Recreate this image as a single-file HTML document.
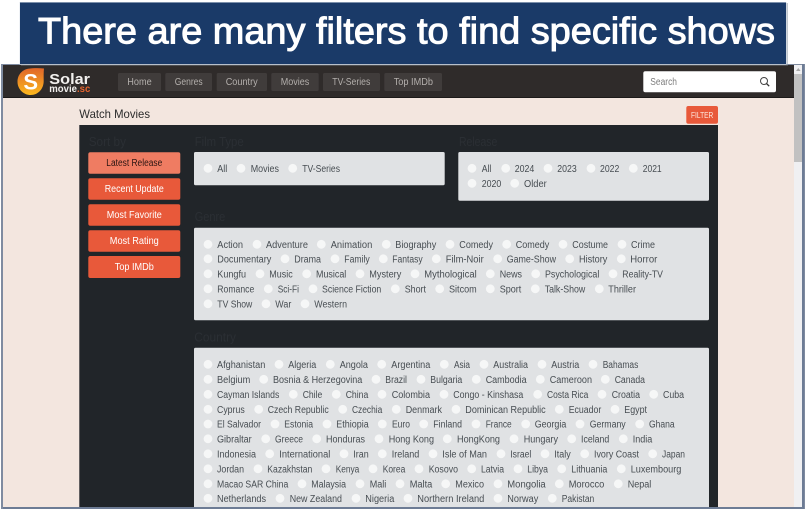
<!DOCTYPE html>
<html><head><meta charset="utf-8"><title>Solar Movie</title>
<style>
html,body{margin:0;padding:0;background:#fff;width:806px;height:510px;overflow:hidden}
svg{display:block;font-family:"Liberation Sans",sans-serif}
.o text{font-size:10px;fill:#474d52}
.o circle{fill:#f6f7f7;r:4.4px}
.n{font-size:10px;fill:#b3afac}
.h{font-size:12.5px;fill:#2b2f34}
.b{font-size:10px;fill:#fff;text-anchor:middle}
</style></head><body>
<svg xmlns="http://www.w3.org/2000/svg" width="806" height="510" viewBox="0 0 806 510">
<defs>
<linearGradient id="lg" x1="0" y1="0" x2="0" y2="1"><stop offset="0" stop-color="#e0662a"/><stop offset="1" stop-color="#fbb81e"/></linearGradient>
</defs>
<rect x="1" y="64" width="804" height="445" fill="#7f8ba0"/>
<rect x="3" y="65" width="800" height="442" fill="#f3e6df"/>
<rect x="3" y="65" width="791" height="33" fill="#2f2b2a"/>
<rect x="3" y="97" width="791" height="1" fill="#1c1a19"/>
<rect x="794" y="65" width="8.500" height="442" fill="#f0f0f2"/>
<rect x="794" y="74" width="8.500" height="88" fill="#c1c1c1"/>
<path d="M798.300 68l-2.300 3h4.600z" fill="#a8a8a8"/>
<rect x="802" y="64" width="2" height="445" fill="#6d7c95"/>
<rect x="3" y="507" width="800" height="2" fill="#6d7c95"/>

<rect x="21" y="3" width="767" height="62.500" fill="#9aa3ad" opacity=".6"/>
<rect x="19.500" y="2" width="767" height="62.500" fill="#dfe5ee"/>
<rect x="20" y="2.500" width="766" height="61.500" fill="#1a3a68"/>
<text x="38" y="43.500" font-size="37" fill="#fff" stroke="#fff" stroke-width="1" textLength="737" lengthAdjust="spacingAndGlyphs">There are many filters to find specific shows</text>

<path d="M28 68.800C33 68 39 68 44 68.500 43.600 72 43.600 76 43.700 81 43.700 89 38 95 30.700 95 23.500 95 17.500 89 17.500 81.700 17.500 75 22 70 28 68.800z" fill="url(#lg)"/>
<text x="30.700" y="89.500" font-size="22" font-weight="700" fill="#fff" text-anchor="middle">S</text>
<text x="49.300" y="84" font-size="15" font-weight="700" fill="#f2f0ee" textLength="40.700" lengthAdjust="spacingAndGlyphs">Solar</text>
<text x="49.300" y="92" font-size="10" font-weight="700" textLength="41" lengthAdjust="spacingAndGlyphs" fill="#f2f0ee">movie<tspan fill="#e8642e">.sc</tspan></text>

<g fill="#403c3b">
<rect x="118" y="73" width="43" height="18" rx="1.500"/>
<rect x="165.300" y="73" width="46.700" height="18" rx="1.500"/>
<rect x="216.700" y="73" width="50.300" height="18" rx="1.500"/>
<rect x="271.300" y="73" width="47.400" height="18" rx="1.500"/>
<rect x="323" y="73" width="57" height="18" rx="1.500"/>
<rect x="384.300" y="73" width="57.700" height="18" rx="1.500"/>
</g>
<text class="n" x="127.300" y="85.200" textLength="24.400" lengthAdjust="spacingAndGlyphs">Home</text>
<text class="n" x="174.700" y="85.200" textLength="28" lengthAdjust="spacingAndGlyphs">Genres</text>
<text class="n" x="225.700" y="85.200" textLength="32" lengthAdjust="spacingAndGlyphs">Country</text>
<text class="n" x="280.700" y="85.200" textLength="28.600" lengthAdjust="spacingAndGlyphs">Movies</text>
<text class="n" x="332.300" y="85.200" textLength="38" lengthAdjust="spacingAndGlyphs">TV-Series</text>
<text class="n" x="393.700" y="85.200" textLength="39.300" lengthAdjust="spacingAndGlyphs">Top IMDb</text>

<rect x="643.300" y="71.300" width="132.700" height="21" rx="2" fill="#fff"/>
<text x="650.300" y="85.200" font-size="10" fill="#7d7d7d" textLength="26.700" lengthAdjust="spacingAndGlyphs">Search</text>
<circle cx="764" cy="81" r="3.500" fill="none" stroke="#444" stroke-width="1"/>
<path d="M766.500 83.500l2.700 2.700" stroke="#333" stroke-width="1.300" fill="none"/>

<text x="79.300" y="118" font-size="12" fill="#2c2c2c" textLength="70.700" lengthAdjust="spacingAndGlyphs">Watch Movies</text>
<rect x="686.300" y="106" width="31.700" height="17.700" rx="2" fill="#e8593a"/>
<text x="691" y="117.800" font-size="8" fill="#fde8e0" textLength="22.300" lengthAdjust="spacingAndGlyphs">FILTER</text>

<rect x="79.300" y="125" width="638.700" height="382" fill="#212529"/>

<text class="h" x="88.700" y="146" textLength="37.300" lengthAdjust="spacingAndGlyphs">Sort by</text>
<text class="h" x="194.700" y="146" textLength="49" lengthAdjust="spacingAndGlyphs">Film Type</text>
<text class="h" x="459" y="146" textLength="38.300" lengthAdjust="spacingAndGlyphs">Release</text>
<text class="h" x="194.700" y="221" textLength="30.600" lengthAdjust="spacingAndGlyphs">Genre</text>
<text class="h" x="194.300" y="341.700" textLength="41.700" lengthAdjust="spacingAndGlyphs">Country</text>

<rect x="88.300" y="152.300" width="92" height="21.400" rx="2" fill="#ef7c62"/>
<rect x="88.300" y="178.300" width="92" height="21.400" rx="2" fill="#e8593a"/>
<rect x="88.300" y="204.300" width="92" height="21.400" rx="2" fill="#e8593a"/>
<rect x="88.300" y="230.300" width="92" height="21.400" rx="2" fill="#e8593a"/>
<rect x="88.300" y="256" width="92" height="22" rx="2" fill="#e8593a"/>
<text class="b" x="134.300" y="166.200" style="fill:#2a1512" textLength="56" lengthAdjust="spacingAndGlyphs">Latest Release</text>
<text class="b" x="134.300" y="192.200" textLength="59" lengthAdjust="spacingAndGlyphs">Recent Update</text>
<text class="b" x="134.300" y="218.200" textLength="55" lengthAdjust="spacingAndGlyphs">Most Favorite</text>
<text class="b" x="134.300" y="244.200" textLength="49" lengthAdjust="spacingAndGlyphs">Most Rating</text>
<text class="b" x="134.300" y="270.200" textLength="39" lengthAdjust="spacingAndGlyphs">Top IMDb</text>

<g fill="#e0e2e4">
<rect x="194" y="152" width="250.700" height="33.300" rx="1.500"/>
<rect x="458.300" y="152" width="250.700" height="48.700" rx="1.500"/>
<rect x="194" y="227.700" width="515" height="92.600" rx="1.500"/>
<path d="M194 507v-157.800q0-1.500 1.500-1.500h512q1.500 0 1.500 1.500v157.800z"/>
</g>

<g class="o">
<g transform="translate(0,172)">
<circle cx="208" cy="-3.700"/><text x="217.300" textLength="10" lengthAdjust="spacingAndGlyphs">All</text>
<circle cx="241" cy="-3.700"/><text x="250.700" textLength="28.300" lengthAdjust="spacingAndGlyphs">Movies</text>
<circle cx="292.700" cy="-3.700"/><text x="302.300" textLength="37.700" lengthAdjust="spacingAndGlyphs">TV-Series</text>
<circle cx="472" cy="-3.700"/><text x="481.700" textLength="9.600" lengthAdjust="spacingAndGlyphs">All</text>
<circle cx="505.700" cy="-3.700"/><text x="514.700" textLength="19.600" lengthAdjust="spacingAndGlyphs">2024</text>
<circle cx="548" cy="-3.700"/><text x="557.300" textLength="19.400" lengthAdjust="spacingAndGlyphs">2023</text>
<circle cx="591" cy="-3.700"/><text x="600" textLength="19.300" lengthAdjust="spacingAndGlyphs">2022</text>
<circle cx="633.300" cy="-3.700"/><text x="642.700" textLength="19" lengthAdjust="spacingAndGlyphs">2021</text>
</g>
<g transform="translate(0,187)">
<circle cx="472" cy="-3.700"/><text x="481.700" textLength="19.600" lengthAdjust="spacingAndGlyphs">2020</text>
<circle cx="514.700" cy="-3.700"/><text x="524" textLength="22.700" lengthAdjust="spacingAndGlyphs">Older</text>
</g>

<g transform="translate(0,248)">
<circle cx="208" cy="-3.700"/><text x="217.300" textLength="25.700" lengthAdjust="spacingAndGlyphs">Action</text>
<circle cx="257" cy="-3.700"/><text x="266" textLength="42" lengthAdjust="spacingAndGlyphs">Adventure</text>
<circle cx="321.300" cy="-3.700"/><text x="330.700" textLength="41.600" lengthAdjust="spacingAndGlyphs">Animation</text>
<circle cx="386.300" cy="-3.700"/><text x="395.300" textLength="41" lengthAdjust="spacingAndGlyphs">Biography</text>
<circle cx="450" cy="-3.700"/><text x="459.300" textLength="33.700" lengthAdjust="spacingAndGlyphs">Comedy</text>
<circle cx="506.700" cy="-3.700"/><text x="515.700" textLength="33.600" lengthAdjust="spacingAndGlyphs">Comedy</text>
<circle cx="563" cy="-3.700"/><text x="572.300" textLength="35.700" lengthAdjust="spacingAndGlyphs">Costume</text>
<circle cx="622" cy="-3.700"/><text x="631" textLength="24" lengthAdjust="spacingAndGlyphs">Crime</text>
</g>
<g transform="translate(0,262.500)">
<circle cx="208" cy="-3.700"/><text x="217.300" textLength="54" lengthAdjust="spacingAndGlyphs">Documentary</text>
<circle cx="285" cy="-3.700"/><text x="294.300" textLength="26.700" lengthAdjust="spacingAndGlyphs">Drama</text>
<circle cx="335" cy="-3.700"/><text x="344.300" textLength="25.400" lengthAdjust="spacingAndGlyphs">Family</text>
<circle cx="383.300" cy="-3.700"/><text x="392.300" textLength="30.400" lengthAdjust="spacingAndGlyphs">Fantasy</text>
<circle cx="436.300" cy="-3.700"/><text x="445.700" textLength="38" lengthAdjust="spacingAndGlyphs">Film-Noir</text>
<circle cx="497.700" cy="-3.700"/><text x="506.700" textLength="49.300" lengthAdjust="spacingAndGlyphs">Game-Show</text>
<circle cx="569.700" cy="-3.700"/><text x="579" textLength="28.300" lengthAdjust="spacingAndGlyphs">History</text>
<circle cx="621.300" cy="-3.700"/><text x="630.300" textLength="27" lengthAdjust="spacingAndGlyphs">Horror</text>
</g>
<g transform="translate(0,277.500)">
<circle cx="208" cy="-3.700"/><text x="217.300" textLength="28.700" lengthAdjust="spacingAndGlyphs">Kungfu</text>
<circle cx="260" cy="-3.700"/><text x="269.300" textLength="23.400" lengthAdjust="spacingAndGlyphs">Music</text>
<circle cx="306.700" cy="-3.700"/><text x="316" textLength="30.300" lengthAdjust="spacingAndGlyphs">Musical</text>
<circle cx="360" cy="-3.700"/><text x="369.300" textLength="32" lengthAdjust="spacingAndGlyphs">Mystery</text>
<circle cx="415" cy="-3.700"/><text x="424.300" textLength="52.400" lengthAdjust="spacingAndGlyphs">Mythological</text>
<circle cx="490.300" cy="-3.700"/><text x="499.700" textLength="22.300" lengthAdjust="spacingAndGlyphs">News</text>
<circle cx="535.700" cy="-3.700"/><text x="545" textLength="54.300" lengthAdjust="spacingAndGlyphs">Psychological</text>
<circle cx="613" cy="-3.700"/><text x="622.300" textLength="40.700" lengthAdjust="spacingAndGlyphs">Reality-TV</text>
</g>
<g transform="translate(0,292.500)">
<circle cx="208" cy="-3.700"/><text x="217.300" textLength="37" lengthAdjust="spacingAndGlyphs">Romance</text>
<circle cx="268.300" cy="-3.700"/><text x="277.700" textLength="21.300" lengthAdjust="spacingAndGlyphs">Sci-Fi</text>
<circle cx="313" cy="-3.700"/><text x="322" textLength="59.300" lengthAdjust="spacingAndGlyphs">Science Fiction</text>
<circle cx="395.300" cy="-3.700"/><text x="404.700" textLength="21.300" lengthAdjust="spacingAndGlyphs">Short</text>
<circle cx="439.700" cy="-3.700"/><text x="449" textLength="27.700" lengthAdjust="spacingAndGlyphs">Sitcom</text>
<circle cx="490.300" cy="-3.700"/><text x="499.700" textLength="21.600" lengthAdjust="spacingAndGlyphs">Sport</text>
<circle cx="535.300" cy="-3.700"/><text x="544.700" textLength="40.600" lengthAdjust="spacingAndGlyphs">Talk-Show</text>
<circle cx="599.300" cy="-3.700"/><text x="608.300" textLength="27.700" lengthAdjust="spacingAndGlyphs">Thriller</text>
</g>
<g transform="translate(0,307.500)">
<circle cx="208" cy="-3.700"/><text x="217.300" textLength="35" lengthAdjust="spacingAndGlyphs">TV Show</text>
<circle cx="266" cy="-3.700"/><text x="275.300" textLength="16" lengthAdjust="spacingAndGlyphs">War</text>
<circle cx="305" cy="-3.700"/><text x="314.300" textLength="32.700" lengthAdjust="spacingAndGlyphs">Western</text>
</g>

<g transform="translate(0,368)">
<circle cx="208" cy="-3.700"/><text x="217" textLength="48.300" lengthAdjust="spacingAndGlyphs">Afghanistan</text>
<circle cx="279" cy="-3.700"/><text x="288.300" textLength="28" lengthAdjust="spacingAndGlyphs">Algeria</text>
<circle cx="330.300" cy="-3.700"/><text x="339.700" textLength="28.300" lengthAdjust="spacingAndGlyphs">Angola</text>
<circle cx="381.700" cy="-3.700"/><text x="391.300" textLength="39" lengthAdjust="spacingAndGlyphs">Argentina</text>
<circle cx="444.300" cy="-3.700"/><text x="454" textLength="16" lengthAdjust="spacingAndGlyphs">Asia</text>
<circle cx="484" cy="-3.700"/><text x="493.300" textLength="34.700" lengthAdjust="spacingAndGlyphs">Australia</text>
<circle cx="542" cy="-3.700"/><text x="551.300" textLength="28" lengthAdjust="spacingAndGlyphs">Austria</text>
<circle cx="593" cy="-3.700"/><text x="602.700" textLength="35.600" lengthAdjust="spacingAndGlyphs">Bahamas</text>
</g>
<g transform="translate(0,383)">
<circle cx="208" cy="-3.700"/><text x="217" textLength="33.300" lengthAdjust="spacingAndGlyphs">Belgium</text>
<circle cx="263.700" cy="-3.700"/><text x="273" textLength="89.300" lengthAdjust="spacingAndGlyphs">Bosnia &amp; Herzegovina</text>
<circle cx="376" cy="-3.700"/><text x="385.300" textLength="21.700" lengthAdjust="spacingAndGlyphs">Brazil</text>
<circle cx="421" cy="-3.700"/><text x="430.300" textLength="32" lengthAdjust="spacingAndGlyphs">Bulgaria</text>
<circle cx="476.300" cy="-3.700"/><text x="485.700" textLength="41" lengthAdjust="spacingAndGlyphs">Cambodia</text>
<circle cx="540.300" cy="-3.700"/><text x="549.700" textLength="42.300" lengthAdjust="spacingAndGlyphs">Cameroon</text>
<circle cx="605.300" cy="-3.700"/><text x="614.700" textLength="30.300" lengthAdjust="spacingAndGlyphs">Canada</text>
</g>
<g transform="translate(0,398)">
<circle cx="208" cy="-3.700"/><text x="217" textLength="62.300" lengthAdjust="spacingAndGlyphs">Cayman Islands</text>
<circle cx="293.300" cy="-3.700"/><text x="302.700" textLength="19.600" lengthAdjust="spacingAndGlyphs">Chile</text>
<circle cx="336.300" cy="-3.700"/><text x="345.700" textLength="22.600" lengthAdjust="spacingAndGlyphs">China</text>
<circle cx="382" cy="-3.700"/><text x="391.700" textLength="38.300" lengthAdjust="spacingAndGlyphs">Colombia</text>
<circle cx="444" cy="-3.700"/><text x="453.300" textLength="70" lengthAdjust="spacingAndGlyphs">Congo - Kinshasa</text>
<circle cx="537.700" cy="-3.700"/><text x="547" textLength="41.300" lengthAdjust="spacingAndGlyphs">Costa Rica</text>
<circle cx="602" cy="-3.700"/><text x="611.700" textLength="28.300" lengthAdjust="spacingAndGlyphs">Croatia</text>
<circle cx="653.700" cy="-3.700"/><text x="663" textLength="21" lengthAdjust="spacingAndGlyphs">Cuba</text>
</g>
<g transform="translate(0,413)">
<circle cx="208" cy="-3.700"/><text x="217" textLength="27.700" lengthAdjust="spacingAndGlyphs">Cyprus</text>
<circle cx="258.700" cy="-3.700"/><text x="267.700" textLength="61" lengthAdjust="spacingAndGlyphs">Czech Republic</text>
<circle cx="342.700" cy="-3.700"/><text x="352" textLength="30.300" lengthAdjust="spacingAndGlyphs">Czechia</text>
<circle cx="396.300" cy="-3.700"/><text x="405.700" textLength="36.300" lengthAdjust="spacingAndGlyphs">Denmark</text>
<circle cx="456" cy="-3.700"/><text x="465.300" textLength="80.400" lengthAdjust="spacingAndGlyphs">Dominican Republic</text>
<circle cx="559.300" cy="-3.700"/><text x="568.700" textLength="32.600" lengthAdjust="spacingAndGlyphs">Ecuador</text>
<circle cx="615" cy="-3.700"/><text x="624.300" textLength="22.700" lengthAdjust="spacingAndGlyphs">Egypt</text>
</g>
<g transform="translate(0,427.700)">
<circle cx="208" cy="-3.700"/><text x="217" textLength="44" lengthAdjust="spacingAndGlyphs">El Salvador</text>
<circle cx="275" cy="-3.700"/><text x="284.300" textLength="28.700" lengthAdjust="spacingAndGlyphs">Estonia</text>
<circle cx="327" cy="-3.700"/><text x="336.300" textLength="32.400" lengthAdjust="spacingAndGlyphs">Ethiopia</text>
<circle cx="382.300" cy="-3.700"/><text x="392" textLength="18" lengthAdjust="spacingAndGlyphs">Euro</text>
<circle cx="423.700" cy="-3.700"/><text x="433.300" textLength="28.700" lengthAdjust="spacingAndGlyphs">Finland</text>
<circle cx="476" cy="-3.700"/><text x="485.700" textLength="26" lengthAdjust="spacingAndGlyphs">France</text>
<circle cx="525.700" cy="-3.700"/><text x="534.700" textLength="31.600" lengthAdjust="spacingAndGlyphs">Georgia</text>
<circle cx="580" cy="-3.700"/><text x="589.700" textLength="36" lengthAdjust="spacingAndGlyphs">Germany</text>
<circle cx="639.700" cy="-3.700"/><text x="649" textLength="25.700" lengthAdjust="spacingAndGlyphs">Ghana</text>
</g>
<g transform="translate(0,442.500)">
<circle cx="208" cy="-3.700"/><text x="217" textLength="34.700" lengthAdjust="spacingAndGlyphs">Gibraltar</text>
<circle cx="265.700" cy="-3.700"/><text x="275" textLength="28" lengthAdjust="spacingAndGlyphs">Greece</text>
<circle cx="316.700" cy="-3.700"/><text x="326" textLength="39" lengthAdjust="spacingAndGlyphs">Honduras</text>
<circle cx="379" cy="-3.700"/><text x="388.700" textLength="45.300" lengthAdjust="spacingAndGlyphs">Hong Kong</text>
<circle cx="447.300" cy="-3.700"/><text x="457" textLength="43" lengthAdjust="spacingAndGlyphs">HongKong</text>
<circle cx="514" cy="-3.700"/><text x="523.700" textLength="34.300" lengthAdjust="spacingAndGlyphs">Hungary</text>
<circle cx="571.700" cy="-3.700"/><text x="581" textLength="28.300" lengthAdjust="spacingAndGlyphs">Iceland</text>
<circle cx="623.300" cy="-3.700"/><text x="632.700" textLength="19.600" lengthAdjust="spacingAndGlyphs">India</text>
</g>
<g transform="translate(0,457.500)">
<circle cx="208" cy="-3.700"/><text x="217" textLength="39" lengthAdjust="spacingAndGlyphs">Indonesia</text>
<circle cx="269.700" cy="-3.700"/><text x="279.300" textLength="51" lengthAdjust="spacingAndGlyphs">International</text>
<circle cx="344" cy="-3.700"/><text x="353.300" textLength="15.400" lengthAdjust="spacingAndGlyphs">Iran</text>
<circle cx="382.300" cy="-3.700"/><text x="391.700" textLength="27.600" lengthAdjust="spacingAndGlyphs">Ireland</text>
<circle cx="433" cy="-3.700"/><text x="442.300" textLength="44.700" lengthAdjust="spacingAndGlyphs">Isle of Man</text>
<circle cx="501" cy="-3.700"/><text x="510.300" textLength="21" lengthAdjust="spacingAndGlyphs">Israel</text>
<circle cx="545" cy="-3.700"/><text x="554.300" textLength="16.400" lengthAdjust="spacingAndGlyphs">Italy</text>
<circle cx="584.700" cy="-3.700"/><text x="594" textLength="45" lengthAdjust="spacingAndGlyphs">Ivory Coast</text>
<circle cx="652.700" cy="-3.700"/><text x="662" textLength="23" lengthAdjust="spacingAndGlyphs">Japan</text>
</g>
<g transform="translate(0,472.500)">
<circle cx="208" cy="-3.700"/><text x="217" textLength="27" lengthAdjust="spacingAndGlyphs">Jordan</text>
<circle cx="258" cy="-3.700"/><text x="267.300" textLength="45" lengthAdjust="spacingAndGlyphs">Kazakhstan</text>
<circle cx="326" cy="-3.700"/><text x="335.700" textLength="23.600" lengthAdjust="spacingAndGlyphs">Kenya</text>
<circle cx="373" cy="-3.700"/><text x="382.700" textLength="22.600" lengthAdjust="spacingAndGlyphs">Korea</text>
<circle cx="419" cy="-3.700"/><text x="428.700" textLength="29.300" lengthAdjust="spacingAndGlyphs">Kosovo</text>
<circle cx="471.700" cy="-3.700"/><text x="481" textLength="23" lengthAdjust="spacingAndGlyphs">Latvia</text>
<circle cx="518" cy="-3.700"/><text x="527.300" textLength="20.700" lengthAdjust="spacingAndGlyphs">Libya</text>
<circle cx="561.700" cy="-3.700"/><text x="571.300" textLength="36" lengthAdjust="spacingAndGlyphs">Lithuania</text>
<circle cx="621.300" cy="-3.700"/><text x="630.700" textLength="50.600" lengthAdjust="spacingAndGlyphs">Luxembourg</text>
</g>
<g transform="translate(0,487.500)">
<circle cx="208" cy="-3.700"/><text x="217" textLength="71.300" lengthAdjust="spacingAndGlyphs">Macao SAR China</text>
<circle cx="302" cy="-3.700"/><text x="311.300" textLength="34.700" lengthAdjust="spacingAndGlyphs">Malaysia</text>
<circle cx="360" cy="-3.700"/><text x="369.700" textLength="16.600" lengthAdjust="spacingAndGlyphs">Mali</text>
<circle cx="400" cy="-3.700"/><text x="409.700" textLength="22.600" lengthAdjust="spacingAndGlyphs">Malta</text>
<circle cx="445.700" cy="-3.700"/><text x="455.300" textLength="28.700" lengthAdjust="spacingAndGlyphs">Mexico</text>
<circle cx="498" cy="-3.700"/><text x="507.300" textLength="38.400" lengthAdjust="spacingAndGlyphs">Mongolia</text>
<circle cx="559.300" cy="-3.700"/><text x="568.700" textLength="35.600" lengthAdjust="spacingAndGlyphs">Morocco</text>
<circle cx="618.300" cy="-3.700"/><text x="627.700" textLength="23.600" lengthAdjust="spacingAndGlyphs">Nepal</text>
</g>
<g transform="translate(0,502)">
<circle cx="208" cy="-3.700"/><text x="217" textLength="49" lengthAdjust="spacingAndGlyphs">Netherlands</text>
<circle cx="280" cy="-3.700"/><text x="289.700" textLength="52.300" lengthAdjust="spacingAndGlyphs">New Zealand</text>
<circle cx="356" cy="-3.700"/><text x="365.300" textLength="29" lengthAdjust="spacingAndGlyphs">Nigeria</text>
<circle cx="408" cy="-3.700"/><text x="417.300" textLength="67" lengthAdjust="spacingAndGlyphs">Northern Ireland</text>
<circle cx="498" cy="-3.700"/><text x="507.300" textLength="31" lengthAdjust="spacingAndGlyphs">Norway</text>
<circle cx="552.300" cy="-3.700"/><text x="561.700" textLength="32.600" lengthAdjust="spacingAndGlyphs">Pakistan</text>
</g>
</g>
</svg>
</body></html>
